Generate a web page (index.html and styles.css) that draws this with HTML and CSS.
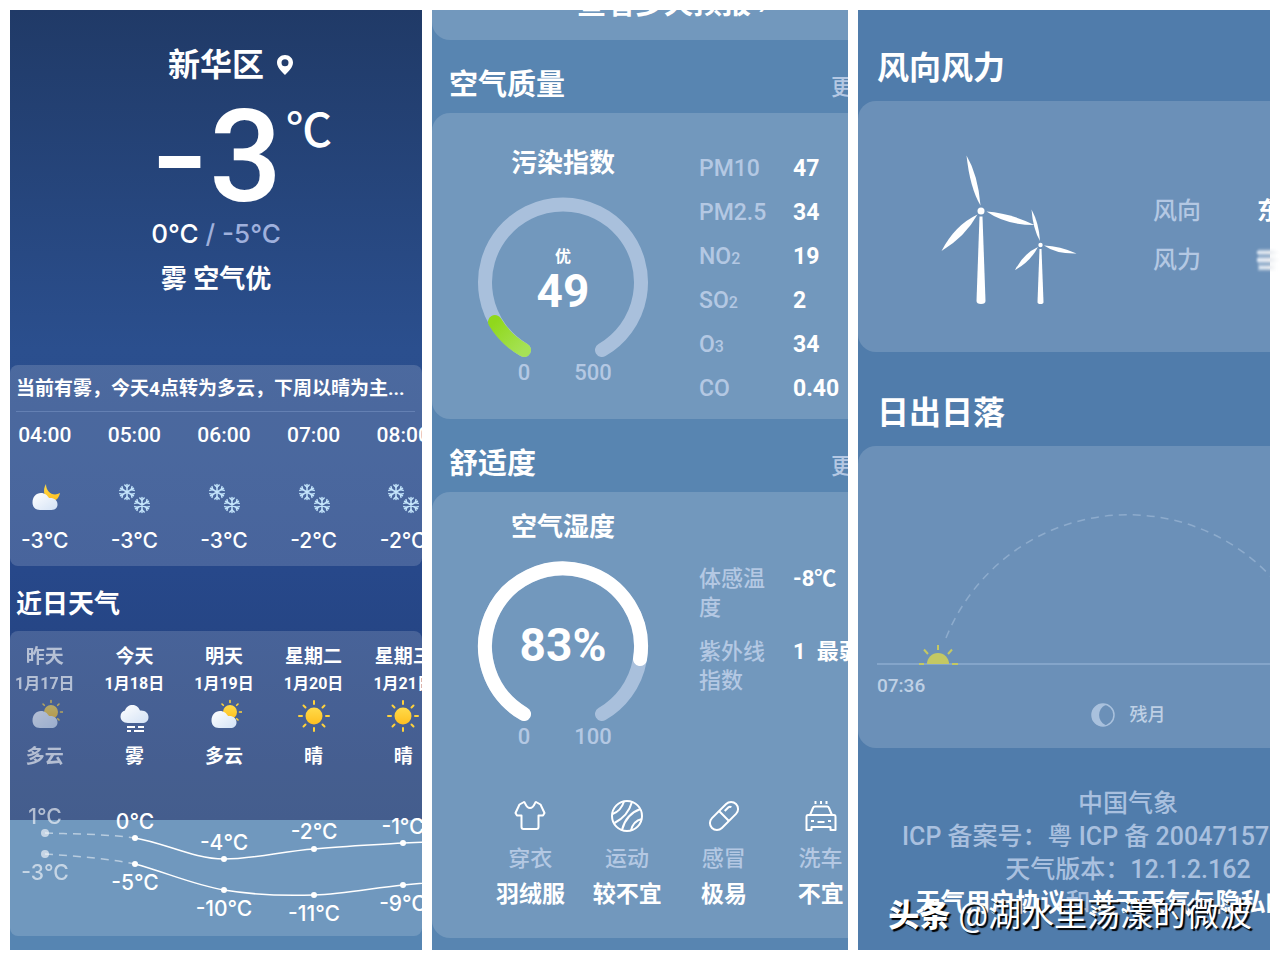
FILE: index.html
```html
<!DOCTYPE html>
<html lang="zh-CN">

<head>
    <meta charset="UTF-8" />
    <meta name="viewport" content="width=device-width, initial-scale=1" />
    <title>天气 - 新华区</title>
    <link rel="stylesheet" href="styles.css">
</head>

<body>
    <!-- icones -->
    <svg class="sprite" aria-hidden="true">
        <defs>
            <linearGradient id="cloudFill" x1="0" y1="0" x2="1" y2="1">
                <stop offset="0" stop-color="#ffffff" />
                <stop offset="1" stop-color="#d3e2f5" />
            </linearGradient>
            <linearGradient id="sunFill" x1="0" y1="0" x2="0" y2="1">
                <stop offset="0" stop-color="#ffdb4a" />
                <stop offset="1" stop-color="#ffbf1f" />
            </linearGradient>
            <linearGradient id="greenFill" x1="0" y1="0" x2="1" y2="1">
                <stop offset="0" stop-color="#90d81c" />
                <stop offset="1" stop-color="#a6e256" />
            </linearGradient>
            <linearGradient id="smudgeFill">
                <stop offset="0" stop-color="#dfe9f5" />
                <stop offset="0.5" stop-color="#e6e9ee" />
                <stop offset="1" stop-color="#ffffff" />
            </linearGradient>
            <g id="flake" fill="none" stroke="#c3e4fb" stroke-width="1.5" stroke-linecap="round">
                <path d="M0-7.5V7.5M-6.5-3.75L6.5 3.75M-6.5 3.75L6.5-3.75" />
                <path d="M-2.2-7L0-4.8L2.2-7M-2.2 7L0 4.8L2.2 7M-7.2-1.6L-4.2-2.4L-5-5.4M7.2 1.6L4.2 2.4L5 5.4M-7.2 1.6L-4.2 2.4L-5 5.4M7.2-1.6L4.2-2.4L5-5.4" />
            </g>
            <symbol id="snow" viewBox="0 0 36 36">
                <use href="#flake" x="11" y="12" />
                <use href="#flake" x="26" y="25" />
            </symbol>
            <symbol id="moon-cloud" viewBox="0 0 36 36">
                <path d="M19 4C15 10 17 20 25 21C29 21 32 18 33 13C26 17 19 12 19 4Z" fill="url(#sunFill)" />
                <path d="M13 30C8 30 5.500 26.500 5.500 22.500C5.500 17 9 13 14 13C18 13 20.500 15.500 22 18C27 17.500 30.500 20 30.500 24.500C30.500 28 28 30 24.500 30Z" fill="url(#cloudFill)" />
            </symbol>
            <symbol id="sun-cloud" viewBox="0 0 36 36">
                <g stroke="#ffd23c" stroke-width="1.600" stroke-linecap="round">
                    <path d="M24 3.500V1.500M30.700 6.300L32 5M33.500 13H35.500M30.700 19.700L32 21M17.300 6.300L16 5" />
                </g>
                <circle cx="24" cy="13" r="7" fill="url(#sunFill)" />
                <path d="M13 29C8 29 5.500 25.500 5.500 21.500C5.500 16 9 12 14 12C18 12 20.500 14.500 22 17C27 16.500 30.500 19 30.500 23.500C30.500 27 28 29 24.500 29Z" fill="url(#cloudFill)" />
            </symbol>
            <symbol id="fog" viewBox="0 0 36 36">
                <path d="M12 24C7 24 4.500 21 4.500 17.500C4.500 14.500 6.500 12 9 11.500C10 8 13 6 16.500 6C20.500 6 23 8.500 24 11.500C29 11 32.500 14 32.500 18C32.500 22 30 24 26 24Z" fill="url(#cloudFill)" />
                <path d="M11 28H19M22 28H28M11 32H15M18 32H28" stroke="#fff" stroke-width="2" />
            </symbol>
            <symbol id="sun" viewBox="0 0 36 36">
                <circle cx="18" cy="17" r="8.500" fill="url(#sunFill)" />
                <path d="M18 5V2M18 32V29M6 17H3M33 17H30M9.500 8.500L7.500 6.500M26.500 8.500L28.500 6.500M9.500 25.500L7.500 27.500M26.500 25.500L28.500 27.500" stroke="#ffd23c" stroke-width="2" stroke-linecap="round" />
            </symbol>
        </defs>
    </svg>

    <main class="screens">
        <!-- agora -->
        <section class="screen screen-now">
            <div class="centered place">
                <h1>新华区</h1>
                <svg class="pin" viewBox="0 0 18 22" width="18" height="22">
                    <path fill="#fff" fill-rule="evenodd" d="M9 1C4.500 1 1 4.300 1 8.500C1 13 5 17 9 21C13 17 17 13 17 8.500C17 4.300 13.500 1 9 1ZM9 5.300A3.500 3.500 0 1 1 9 12.300A3.500 3.500 0 1 1 9 5.300Z" />
                </svg>
            </div>
            <div class="centered current">
                <span class="degrees"><span class="minus">-</span>3</span>
                <span class="unit">℃</span>
            </div>
            <p class="range">0℃ <span class="muted">/ -5℃</span></p>
            <p class="condition">雾 空气优</p>

            <div class="card hourly">
                <p class="summary">当前有雾，今天4点转为多云，下周以晴为主...</p>
                <ul class="strip">
                    <li><time>04:00</time><svg class="weather"><use href="#moon-cloud" /></svg><span class="temp">-3℃</span></li>
                    <li><time>05:00</time><svg class="weather"><use href="#snow" /></svg><span class="temp">-3℃</span></li>
                    <li><time>06:00</time><svg class="weather"><use href="#snow" /></svg><span class="temp">-3℃</span></li>
                    <li><time>07:00</time><svg class="weather"><use href="#snow" /></svg><span class="temp">-2℃</span></li>
                    <li><time>08:00</time><svg class="weather"><use href="#snow" /></svg><span class="temp">-2℃</span></li>
                </ul>
            </div>

            <h2>近日天气</h2>
            <div class="card daily">
                <ul class="strip">
                    <li class="past"><span>昨天</span><time>1月17日</time><svg class="weather"><use href="#sun-cloud" /></svg><span>多云</span></li>
                    <li><span>今天</span><time>1月18日</time><svg class="weather"><use href="#fog" /></svg><span>雾</span></li>
                    <li><span>明天</span><time>1月19日</time><svg class="weather"><use href="#sun-cloud" /></svg><span>多云</span></li>
                    <li><span>星期二</span><time>1月20日</time><svg class="weather"><use href="#sun" /></svg><span>晴</span></li>
                    <li><span>星期三</span><time>1月21日</time><svg class="weather"><use href="#sun" /></svg><span>晴</span></li>
                </ul>
                <div class="strip-chart">
                    <svg class="chart" viewBox="0 0 448 136">
                        <g fill="none" stroke="#fff" stroke-width="1.500">
                            <path class="dashed" d="M45 33C75 34 105 34 135 38" />
                            <path class="dashed" d="M45 54C75 56 105 58 135 64" />
                            <path d="M135 38C165 43 194 59 224 59C254 59 284 51 314 49C344 46 373 45 403 43L448 41" />
                            <path d="M135 64C165 72 194 85 224 90C254 95 284 96 314 95C344 94 373 88 403 85L448 81" />
                        </g>
                        <g class="faded" fill="#fff">
                            <circle cx="45" cy="33" r="4" />
                            <circle cx="45" cy="54" r="4" />
                            <text x="45" y="24">1℃</text>
                            <text x="45" y="80">-3℃</text>
                        </g>
                        <g fill="#fff">
                            <circle cx="135" cy="38" r="3" />
                            <circle cx="224" cy="59" r="3" />
                            <circle cx="314" cy="49" r="3" />
                            <circle cx="403" cy="43" r="3" />
                            <circle cx="135" cy="64" r="3" />
                            <circle cx="224" cy="90" r="3" />
                            <circle cx="314" cy="95" r="3" />
                            <circle cx="403" cy="85" r="3" />
                            <text x="135" y="29">0℃</text>
                            <text x="224" y="50">-4℃</text>
                            <text x="314" y="39">-2℃</text>
                            <text x="403" y="34">-1℃</text>
                            <text x="135" y="90">-5℃</text>
                            <text x="224" y="116">-10℃</text>
                            <text x="314" y="121">-11℃</text>
                            <text x="403" y="111">-9℃</text>
                        </g>
                    </svg>
                </div>
            </div>
        </section>

        <!-- qualidade do ar e conforto -->
        <section class="screen screen-air">
            <div class="wide">
                <div class="card forecast-more">
                    <button type="button">查看多天预报 ›</button>
                </div>

                <div class="head">
                    <h2>空气质量</h2>
                    <a href="#air">更多</a>
                </div>
                <div class="card air" id="air">
                    <div class="split">
                        <div class="gauge">
                            <h3>污染指数</h3>
                            <svg viewBox="0 0 172 190" width="172" height="190">
                                <path class="track" d="M47 153A78 78 0 1 1 125 153" />
                                <path class="value" stroke="url(#greenFill)" d="M47 153A78 78 0 0 1 18 125" />
                                <text class="level" x="86" y="65">优</text>
                                <text class="number" x="86" y="110">49</text>
                                <text class="scale" x="47" y="183">0</text>
                                <text class="scale" x="116" y="183">500</text>
                            </svg>
                        </div>
                        <dl class="pollutants">
                            <dt>PM10</dt><dd>47</dd>
                            <dt>PM2.5</dt><dd>34</dd>
                            <dt>NO<small>2</small></dt><dd>19</dd>
                            <dt>SO<small>2</small></dt><dd>2</dd>
                            <dt>O<small>3</small></dt><dd>34</dd>
                            <dt>CO</dt><dd>0.40</dd>
                        </dl>
                    </div>
                </div>

                <div class="head">
                    <h2>舒适度</h2>
                    <a href="#comfort">更多</a>
                </div>
                <div class="card comfort" id="comfort">
                    <div class="split">
                        <div class="gauge">
                            <h3>空气湿度</h3>
                            <svg viewBox="0 0 172 190" width="172" height="190">
                                <path class="track" d="M47 153A78 78 0 1 1 125 153" />
                                <path class="value" stroke="#fff" d="M47 153A78 78 0 1 1 163 98" />
                                <text class="number" x="86" y="100">83%</text>
                                <text class="scale" x="47" y="183">0</text>
                                <text class="scale" x="116" y="183">100</text>
                            </svg>
                        </div>
                        <dl class="feels">
                            <dt>体感温度</dt><dd>-8℃</dd>
                            <dt>紫外线指数</dt><dd>1&ensp;最弱</dd>
                        </dl>
                    </div>
                    <ul class="tips">
                        <li>
                            <svg viewBox="0 0 32 32"><path d="M10 2L5.500 4.500L1.500 13L3 15.500H7.500V27Q7.500 29 9.500 29H22.500Q24.500 29 24.500 27V15.500H29L30.500 13L26.500 4.500L22 2C20.500 2 20.500 8 16 8C11.500 8 11.500 2 10 2Z" /></svg>
                            <span>穿衣</span><b>羽绒服</b>
                        </li>
                        <li>
                            <svg viewBox="0 0 32 32"><circle cx="16" cy="16" r="15" /><path d="M1.500 14Q10 11 13 1.500M3.500 23Q17 16 21 2M11 30Q15 14 29.500 9M20 30.500Q22 21 31 19" /></svg>
                            <span>运动</span><b>较不宜</b>
                        </li>
                        <li>
                            <svg viewBox="0 0 32 32"><g transform="rotate(-45 16 16)"><rect x="-1" y="9" width="34" height="14" rx="7" /><path d="M16 9V23M20 13H25Q27 13 27.500 15" /></g></svg>
                            <span>感冒</span><b>极易</b>
                        </li>
                        <li>
                            <svg viewBox="0 0 32 32"><path d="M10.500 1V4M16 1V4M21.500 1V4M5 15L8 8Q8.500 6.500 10 6.500H22Q23.500 6.500 24 8L27 15M3 15H29Q30.500 15 30.500 17V30H25.500V27H6.500V30H1.500V17Q1.500 15 3 15ZM6 21H9M12.500 22H19.500M23 21H26" /></svg>
                            <span>洗车</span><b>不宜</b>
                        </li>
                    </ul>
                </div>
            </div>
        </section>

        <!-- vento e sol -->
        <div class="column">
            <section class="screen screen-sun">
                <div class="wide">
                    <div class="head">
                        <h2>风向风力</h2>
                    </div>
                    <div class="card wind">
                        <svg class="turbines" viewBox="0 0 137 150" width="137" height="150" fill="#fff">
                            <path d="M26.500 0.500Q38 20 40.500 50.500Q30 33 26.500 0.500Z" />
                            <path d="M46.500 56.500Q70 58 94.500 70Q66 70 46.500 56.500Z" />
                            <path d="M37.500 59.500Q25 82 1.500 96Q15 70 37.500 59.500Z" />
                            <path d="M39.500 61.500H42.500L45.500 146Q45.500 149 41 149Q36.500 149 36.500 146Z" />
                            <circle cx="41" cy="56" r="3.500" />
                            <path d="M91.500 54.500Q99 68 100 86Q93 74 91.500 54.500Z" />
                            <path d="M104 90.500Q120 91 136.500 98.500Q116 99 104 90.500Z" />
                            <path d="M98 92Q90 107 75 115Q84 98 98 92Z" />
                            <path d="M99.500 94H101.500L103.500 147Q103.500 149 100.500 149Q97.500 149 97.500 147Z" />
                            <circle cx="100.500" cy="90" r="2.200" />
                        </svg>
                        <dl>
                            <dt>风向</dt><dd>东北风</dd>
                            <dt>风力</dt><dd></dd>
                        </dl>
                    </div>

                    <div class="head">
                        <h2>日出日落</h2>
                    </div>
                    <div class="card sunrise">
                        <svg class="sunpath" viewBox="0 0 540 228">
                            <path d="M19 218H521" stroke="#84a5ca" stroke-width="2" />
                            <path d="M88 192A196 196 0 0 1 452 192" fill="none" stroke="#8dabcc" stroke-width="1.500" stroke-dasharray="8 6" />
                            <g fill="#c4c863" stroke="#c4c863">
                                <path d="M69 218A11 11 0 0 1 91 218Z" stroke="none" />
                                <path d="M80 199V204M66 203.500L70 208M94 203.500L90 208M61 218H66M94 218H100" stroke-width="2" />
                            </g>
                        </svg>
                        <time>07:36</time>
                        <p class="moon">
                            <svg viewBox="0 0 24 24" width="24" height="24">
                                <circle cx="12" cy="12" r="11" fill="none" stroke="#a9c1dd" stroke-width="1.500" />
                                <path d="M12 1A11 11 0 0 0 12 23Q14 23 14.500 22C6 18 6 6 14.500 2Q14 1 12 1Z" fill="#a9c1dd" />
                            </svg>
                            残月
                        </p>
                    </div>

                    <footer>
                        <p>中国气象</p>
                        <p class="record">ICP 备案号：粤 ICP 备 20047157</p>
                        <p>天气版本：12.1.2.162</p>
                        <p><a href="#terms">天气用户协议</a>和<a href="#privacy">关于天气与隐私的声明</a></p>
                    </footer>
                </div>
                <p class="watermark"><b>头条</b> @湖水里荡漾的微波</p>
            </section>
            <svg class="smudge" viewBox="0 0 24 24" width="24" height="24" fill="url(#smudgeFill)">
                <rect x="2" y="1" width="20" height="22" opacity="0.4" />
                <rect x="1" y="3" width="22" height="3" />
                <rect x="1" y="10" width="22" height="4" />
                <rect x="3" y="18" width="18" height="3" />
            </svg>
        </div>
    </main>
</body>

</html>
```
FILE: styles.css
```css
* {
    box-sizing: border-box;
    margin: 0;
    padding: 0;
}

body {
    font-family: Roboto, "Noto Sans CJK SC", sans-serif;
    font-weight: 500;
    background-color: #fff;
    color: #fff;
}

ul {
    list-style: none;
}

a {
    color: inherit;
    text-decoration: none;
}

svg {
    display: block;
}

.sprite {
    position: absolute;
    width: 0;
    height: 0;
}

.screens {
    display: grid;
    grid-template-columns: 412fr 416fr 412fr;
    gap: 10px;
    padding: 10px;
    min-height: 100vh;
}

.column {
    display: grid;
    position: relative;
    min-width: 0;
}

.screen {
    position: relative;
    min-width: 0;
    overflow: hidden;
}

.card {
    background-color: rgba(255, 255, 255, 0.155);
    border-radius: 18px;
    overflow: hidden;
}

.muted {
    color: #9fb0dc;
}

/* agora */
.screen-now {
    padding-top: 35px;
    background: linear-gradient(#203a67 0px, #2b4f8e 340px, #27488a 560px, #223f78 810px, #5685b2 810px);
}

.screen-now .card {
    border-radius: 8px;
}

.centered {
    display: grid;
    grid-template-columns: 1fr auto 1fr;
}

.place {
    align-items: center;
    gap: 12px;
    line-height: 40px;
}

.place h1 {
    grid-column: 2;
    font-size: 32px;
}

.current {
    gap: 4px;
    margin-top: 15px;
    line-height: 110px;
}

.degrees {
    grid-column: 2;
    font-size: 128px;
}

.minus {
    font-family: Inter, sans-serif;
}

.unit {
    font-size: 46px;
    line-height: 60px;
}

.range,
.condition {
    font-size: 26px;
    line-height: 40px;
    text-align: center;
}

.range {
    margin-top: 2px;
}

.condition {
    margin-top: 5px;
    font-weight: 700;
}

.strip,
.strip-chart {
    margin: 0 -26px 0 -10px;
}

.strip {
    display: grid;
    grid-template-columns: repeat(5, 1fr);
}

.strip li {
    display: flex;
    flex-direction: column;
    align-items: center;
    font-size: 19px;
    line-height: 28px;
    white-space: nowrap;
}

.weather {
    width: 36px;
    height: 36px;
}

.hourly {
    margin-top: 66px;
    padding: 10px 0 11px;
}

.summary {
    margin: 0 7px 9px 6px;
    padding-bottom: 8px;
    border-bottom: 1px solid #6480b3;
    font-size: 19px;
    font-weight: 700;
    line-height: 28px;
    white-space: nowrap;
}

.hourly time {
    font-size: 21px;
}

.hourly .weather {
    margin: 31px 0 11px;
}

.temp,
.range,
.chart text {
    font-family: Inter, "Noto Sans CJK SC", sans-serif;
}

.strip .temp,
.chart text {
    font-size: 21px;
    font-weight: 500;
}

.screen-now h2 {
    padding: 20px 6px 9px;
    font-size: 26px;
    line-height: 36px;
}

.daily {
    padding-top: 12px;
}

.daily li {
    font-weight: 700;
}

.daily time {
    font-size: 16px;
    line-height: 26px;
}

.daily .weather {
    margin: 2px 0 8px;
}

.past,
.faded {
    opacity: 0.6;
}

.strip-chart {
    margin-top: 29px;
}

.chart {
    width: 100%;
}

.chart text {
    text-anchor: middle;
}

.dashed {
    stroke-dasharray: 8 6;
    opacity: 0.5;
}

/* qualidade do ar */
.screen-air {
    background-color: #5885b1;
}

.screen-air .wide {
    margin-right: -46px;
}

.forecast-more {
    margin-top: -40px;
    padding: 13px 0 14px 18px;
    text-align: center;
}

.forecast-more button {
    background: none;
    border: none;
    color: #fff;
    font-family: inherit;
    font-size: 29px;
    font-weight: 700;
    line-height: 43px;
    cursor: pointer;
}

.head {
    display: flex;
    justify-content: space-between;
    align-items: center;
    padding: 25px 17px 8px;
}

.head h2 {
    font-size: 29px;
    line-height: 40px;
}

.head a {
    padding-top: 6px;
    color: #b4c8e3;
    font-size: 23px;
    line-height: 34px;
}

.air {
    padding: 34px 0 8px;
}

.split {
    display: flex;
    gap: 50px;
    padding-left: 45px;
}

.gauge h3 {
    margin-bottom: 18px;
    font-size: 26px;
    font-weight: 700;
    line-height: 32px;
    text-align: center;
}

.gauge path {
    fill: none;
    stroke-width: 14px;
    stroke-linecap: round;
}

.gauge .track {
    stroke: #a9c0dc;
}

.gauge text {
    fill: #fff;
    font-weight: 700;
    text-anchor: middle;
}

.gauge .level {
    font-size: 16px;
}

.gauge .number {
    font-size: 46px;
}

.gauge .scale {
    fill: #b4c8e3;
    font-size: 22px;
    font-weight: 500;
}

dl {
    display: grid;
    font-size: 22px;
}

dt {
    color: #b4c8e3;
}

dd {
    font-weight: 700;
    white-space: nowrap;
}

.pollutants {
    grid-template-columns: 94px auto;
    font-size: 23px;
    line-height: 44px;
}

.pollutants small {
    font-size: 16px;
    line-height: 16px;
}

.comfort {
    padding: 19px 0 24px;
}

.feels {
    grid-template-columns: 70px auto;
    gap: 15px 24px;
    align-content: start;
    padding-top: 53px;
    line-height: 29px;
}

.tips {
    display: grid;
    grid-template-columns: repeat(4, 1fr);
    margin-top: 49px;
    padding: 0 25px 0 50px;
}

.tips li {
    display: flex;
    flex-direction: column;
    align-items: center;
}

.tips svg {
    width: 32px;
    height: 32px;
    margin-bottom: 10px;
    fill: none;
    stroke: #fff;
    stroke-width: 2px;
    stroke-linejoin: round;
}

.tips span {
    color: #b4c8e3;
    font-size: 22px;
    line-height: 34px;
}

.tips b {
    font-size: 23px;
    line-height: 38px;
}

/* vento e sol */
.screen-sun {
    background-color: #507cab;
}

.screen-sun .wide {
    margin-right: -128px;
}

.screen-sun .head {
    padding: 38px 19px 13px;
}

.screen-sun .head h2 {
    font-size: 32px;
}

.wind {
    display: flex;
    align-items: flex-start;
    gap: 76px;
    margin-bottom: 3px;
    padding: 54px 0 47px 82px;
}

.wind dl {
    grid-template-columns: 80px auto;
    gap: 0 24px;
    padding-top: 32px;
    font-size: 24px;
    line-height: 49px;
}

.smudge {
    position: absolute;
    top: 238px;
    right: -10px;
    filter: blur(1px);
}

.sunrise {
    padding-bottom: 21px;
    color: #bfd0e5;
    font-size: 18px;
    line-height: 24px;
}

.sunpath {
    width: 100%;
}

.sunrise time {
    display: block;
    margin: 0 19px 5px;
    font-size: 19px;
}

.moon {
    display: flex;
    justify-content: center;
    gap: 15px;
}

footer {
    padding-top: 39px;
    color: #a9c0df;
    font-size: 25px;
    line-height: 33px;
    text-align: center;
    white-space: nowrap;
}

footer a {
    color: #fff;
    font-weight: 700;
}

.record {
    padding-left: 44px;
    text-align: left;
}

.watermark {
    position: absolute;
    right: 18px;
    bottom: 12px;
    font-size: 33px;
    font-weight: 400;
    line-height: 44px;
    white-space: nowrap;
    text-shadow: 2px 2px 1px #000;
}

.watermark b {
    font-size: 31px;
    font-weight: 900;
}
```
